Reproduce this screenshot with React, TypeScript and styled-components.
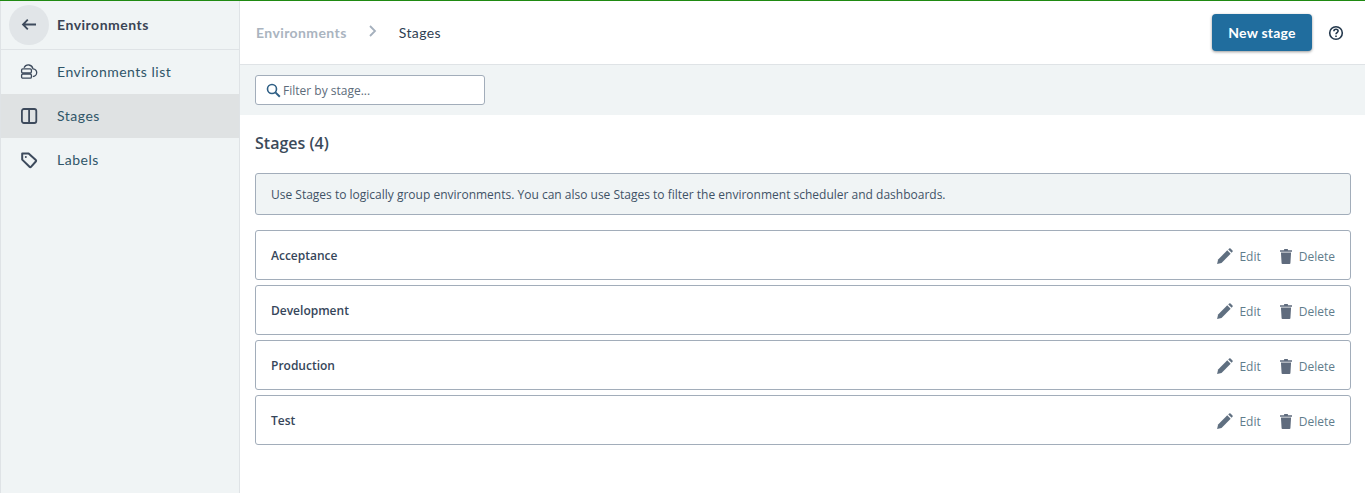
import React from "react";
import styled, { createGlobalStyle } from "styled-components";

const GlobalStyle = createGlobalStyle`
  html, body {
    margin: 0;
    padding: 0;
    background: #fff;
  }
  body {
    font-family: "Open Sans", "Liberation Sans", sans-serif;
  }
`;

const stages = ["Acceptance", "Development", "Production", "Test"];

const ArrowLeft = () => (
  <svg width="20" height="20" viewBox="0 0 20 20" fill="none" stroke="#3d4a5c" strokeWidth="1.8">
    <path d="M17 9.5H4M8.8 4.7L4 9.5l4.8 4.8" />
  </svg>
);

const EnvIcon = () => (
  <svg width="18" height="18" viewBox="0 0 18 18" fill="none" stroke="#3d4a5c" strokeWidth="1.3">
    <rect x="1.6" y="5.8" width="9.8" height="4.2" rx="1.2" />
    <rect x="1.6" y="11" width="9.8" height="4.2" rx="1.2" />
    <path d="M4 4.8C5 2.8 7 1.7 9 2c2 .3 3.5 2 4 3.8 2 .3 3.7 1.8 3.7 3.8s-1.7 3.9-3.9 4.1" />
  </svg>
);

const ColumnsIcon = () => (
  <svg width="18" height="18" viewBox="0 0 18 18" fill="none" stroke="#3d4a5c" strokeWidth="1.8">
    <rect x="1.9" y="2" width="14.4" height="14" rx="2" />
    <path d="M9.1 2v14" />
  </svg>
);

const TagIcon = () => (
  <svg width="18" height="18" viewBox="0 0 18 18" fill="none" stroke="#3d4a5c" strokeWidth="2" strokeLinejoin="round">
    <path d="M2.2 2.4h6.4l7.2 6.6a1 1 0 0 1 0 1.5L11 15.8a1 1 0 0 1-1.5 0L2.2 8.6z" />
    <circle cx="5.8" cy="6" r="1" fill="#3d4a5c" stroke="none" />
  </svg>
);

const SearchIcon = () => (
  <svg width="15" height="15" viewBox="0 0 15 15" fill="none" stroke="#2f5f85" strokeWidth="1.6">
    <circle cx="6" cy="6" r="4.5" />
    <path d="M9.4 9.4l4.4 4.4" strokeWidth="2" />
  </svg>
);

const HelpIcon = () => (
  <svg width="16" height="16" viewBox="0 0 16 16" fill="none" stroke="#24384c" strokeWidth="1.6">
    <circle cx="8" cy="8" r="6.3" />
    <path d="M5.9 6.3c0-1.2.9-2 2.1-2s2.1.8 2.1 1.8c0 1.5-2.1 1.6-2.1 3.2" />
    <path d="M8 10.6v1.4" />
  </svg>
);

const PencilIcon = () => (
  <svg width="17" height="17" viewBox="0 0 16 16" fill="#5f6f80">
    <path d="M1 15l1-4.2 8.6-8.6 3.2 3.2L5.2 14z" />
    <path d="M11.5 1.3l.9-.8a1 1 0 0 1 1.3 0l1.8 1.8a1 1 0 0 1 0 1.3l-.8.9z" />
  </svg>
);

const TrashIcon = () => (
  <svg width="14" height="15" viewBox="0 0 14 16" fill="#5f6b7d">
    <path d="M5 0h4v1.2h4.4v1.8H.6V1.2H5z" />
    <path d="M1.6 3.8h10.8l-.7 11.4a1 1 0 0 1-1 .8H3.3a1 1 0 0 1-1-.8z" />
  </svg>
);

export default function App() {
  return (
    <Page>
      <GlobalStyle />
      <Sidebar>
        <SideHeader>
          <BackButton>
            <ArrowLeft />
          </BackButton>
          <SideTitle>Environments</SideTitle>
        </SideHeader>
        <NavItem>
          <NavIcon>
            <EnvIcon />
          </NavIcon>
          <NavLabel>Environments list</NavLabel>
        </NavItem>
        <NavItem $active>
          <NavIcon>
            <ColumnsIcon />
          </NavIcon>
          <NavLabel>Stages</NavLabel>
        </NavItem>
        <NavItem>
          <NavIcon>
            <TagIcon />
          </NavIcon>
          <NavLabel>Labels</NavLabel>
        </NavItem>
      </Sidebar>
      <Main>
        <TopBar>
          <Breadcrumbs>
            <Crumb>Environments</Crumb>
            <CrumbChevron viewBox="0 0 10 12" width="10" height="12">
              <path d="M2 1l5 5-5 5" fill="none" stroke="#a5b0bd" strokeWidth="1.8" />
            </CrumbChevron>
            <Crumb $current>Stages</Crumb>
          </Breadcrumbs>
          <TopActions>
            <PrimaryButton>New stage</PrimaryButton>
            <HelpIcon />
          </TopActions>
        </TopBar>
        <FilterBar>
          <SearchBox>
            <SearchIcon />
            <SearchInput placeholder="Filter by stage..." />
          </SearchBox>
        </FilterBar>
        <Content>
          <Heading>Stages (4)</Heading>
          <Notice>
            Use Stages to logically group environments. You can also use Stages to filter the environment scheduler and dashboards.
          </Notice>
          <StageList>
            {stages.map((stage) => (
              <StageRow key={stage}>
                <StageName>{stage}</StageName>
                <RowActions>
                  <RowAction>
                    <PencilIcon />
                    Edit
                  </RowAction>
                  <RowAction>
                    <TrashIcon />
                    Delete
                  </RowAction>
                </RowActions>
              </StageRow>
            ))}
          </StageList>
        </Content>
      </Main>
    </Page>
  );
}

const Page = styled.div`
  display: flex;
  box-sizing: border-box;
  width: 1365px;
  height: 493px;
  border-top: 1px solid #1f8a12;
`;

const Sidebar = styled.aside`
  box-sizing: border-box;
  flex: 0 0 240px;
  background: #f0f4f5;
  border-left: 1px solid #dfe3e6;
  border-right: 1px solid #dfe3e6;
`;

const SideHeader = styled.div`
  display: flex;
  align-items: center;
  box-sizing: border-box;
  height: 49px;
  padding-left: 8px;
  border-bottom: 1px solid #dfe3e6;
`;

const BackButton = styled.div`
  display: flex;
  align-items: center;
  justify-content: center;
  width: 40px;
  height: 40px;
  border-radius: 50%;
  background: #e1e5e8;
`;

const SideTitle = styled.div`
  margin: 0 0 2px 8px;
  font-family: "Lato", sans-serif;
  font-size: 14px;
  font-weight: 700;
  letter-spacing: 0.5px;
  color: #3b4454;
`;

const NavItem = styled.div<{ $active?: boolean }>`
  display: flex;
  align-items: center;
  height: 44px;
  font-family: "Lato", sans-serif;
  font-size: 14px;
  letter-spacing: 0.5px;
  color: #2f5568;
  background: ${(p) => (p.$active ? "#dfe2e3" : "transparent")};
`;

const NavIcon = styled.span`
  display: flex;
  justify-content: center;
  width: 56px;
`;

const NavLabel = styled.span`
  margin-bottom: 2px;
`;

const Main = styled.main`
  flex: 1;
  min-width: 0;
`;

const TopBar = styled.header`
  display: flex;
  align-items: center;
  justify-content: space-between;
  box-sizing: border-box;
  height: 64px;
  padding: 0 21px 0 16px;
  border-bottom: 1px solid #dfe3e6;
`;

const Breadcrumbs = styled.nav`
  display: flex;
  align-items: center;
`;

const Crumb = styled.span<{ $current?: boolean }>`
  font-family: "Lato", sans-serif;
  font-size: 14px;
  font-weight: ${(p) => (p.$current ? 400 : 700)};
  letter-spacing: 0.4px;
  color: ${(p) => (p.$current ? "#2f3e52" : "#aab4bf")};
`;

const CrumbChevron = styled.svg`
  margin: -3px 21px 0 21px;
`;

const TopActions = styled.div`
  display: flex;
  align-items: center;
  gap: 16px;
`;

const PrimaryButton = styled.button`
  width: 100px;
  height: 37px;
  border: 0;
  border-radius: 4px;
  background: #206d9e;
  box-shadow: 0 1px 3px rgba(0, 0, 0, 0.4);
  font-family: "Lato", sans-serif;
  font-size: 14px;
  font-weight: 700;
  letter-spacing: 0.2px;
  color: #fff;
`;

const FilterBar = styled.div`
  display: flex;
  align-items: center;
  height: 50px;
  padding-left: 15px;
  background: #f0f4f5;
`;

const SearchBox = styled.label`
  display: flex;
  align-items: center;
  gap: 2px;
  box-sizing: border-box;
  width: 230px;
  height: 30px;
  padding-left: 10px;
  background: #fff;
  border: 1px solid #a2adba;
  border-radius: 3px;
`;

const SearchInput = styled.input`
  flex: 1;
  min-width: 0;
  padding: 0;
  border: 0;
  outline: 0;
  background: transparent;
  font-family: "Open Sans", sans-serif;
  font-size: 12px;
  color: #5d6b7a;
  &::placeholder {
    color: #5d6b7a;
    opacity: 1;
  }
`;

const Content = styled.section`
  padding: 0 14px 0 15px;
`;

const Heading = styled.h1`
  margin: 17px 0 19px;
  font-family: "Open Sans", sans-serif;
  font-size: 16px;
  line-height: 22px;
  font-weight: 600;
  color: #3b4a5a;
`;

const Notice = styled.div`
  box-sizing: border-box;
  height: 42px;
  padding: 0 15px;
  line-height: 42px;
  font-size: 12px;
  color: #3f5266;
  background: #f0f4f5;
  border: 1px solid #a2adba;
  border-radius: 3px;
`;

const StageList = styled.div`
  display: flex;
  flex-direction: column;
  gap: 5px;
  margin-top: 15px;
`;

const StageRow = styled.div`
  display: flex;
  align-items: center;
  justify-content: space-between;
  box-sizing: border-box;
  height: 50px;
  padding: 0 15px;
  border: 1px solid #a2adba;
  border-radius: 3px;
`;

const StageName = styled.div`
  font-size: 12px;
  font-weight: 600;
  color: #36465a;
`;

const RowActions = styled.div`
  display: flex;
  align-items: center;
  gap: 18px;
  padding-top: 2px;
`;

const RowAction = styled.span`
  display: flex;
  align-items: center;
  gap: 6px;
  font-size: 12px;
  color: #5f7d8c;
`;
